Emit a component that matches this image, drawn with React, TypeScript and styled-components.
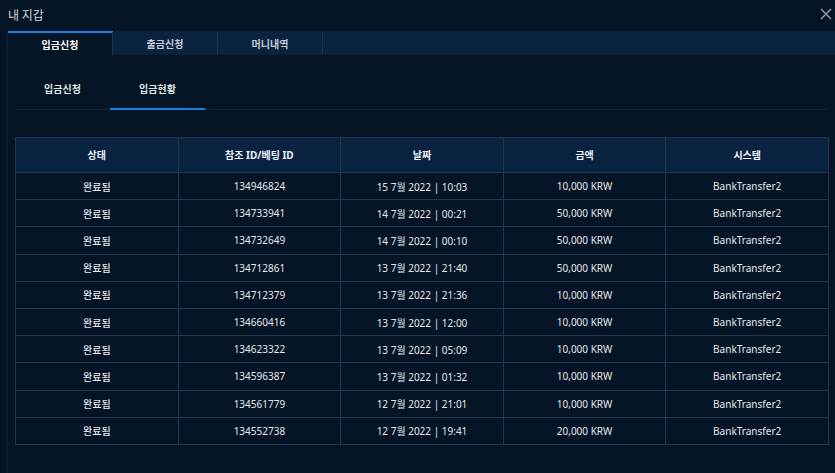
import React from "react";
import styled, { createGlobalStyle } from "styled-components";

const Global = createGlobalStyle`
  html, body { margin: 0; padding: 0; background: #061526; }
  body { font-family: "Noto Sans", "Noto Sans CJK KR", sans-serif; }
`;

const Page = styled.div`
  width: 835px;
  height: 473px;
  background: #061526;
  color: #e6e9ee;
  display: flex;
  flex-direction: column;
  overflow: hidden;
`;

const TitleBar = styled.div`
  height: 31px;
  display: flex;
  align-items: center;
  justify-content: space-between;
  padding: 0 2px 3px 8px;
  box-sizing: border-box;
`;

const Title = styled.div`
  font-size: 12px;
  color: #d0d4da;
  font-family: "Noto Sans CJK KR", sans-serif;
`;

const Close = styled.button`
  background: none;
  border: none;
  padding: 0;
  width: 14px;
  height: 14px;
  display: flex;
  align-items: center;
  justify-content: center;
  cursor: pointer;
`;

const Panel = styled.div`
  flex: 1;
  margin-left: 7px;
  border-left: 1px solid #112339;
  display: flex;
  flex-direction: column;
`;

const TabBar = styled.div`
  height: 24px;
  background: #0a2340;
  display: flex;
  border-bottom: 1px solid #0d1c2e;
  box-sizing: border-box;
`;

const Tab = styled.div<{ $active?: boolean }>`
  width: 105px;
  box-sizing: border-box;
  display: flex;
  align-items: center;
  justify-content: center;
  font-size: 10px;
  font-weight: 700;
  font-family: "Noto Sans CJK KR", sans-serif;
  color: ${(p) => (p.$active ? "#ffffff" : "#c6ccd4")};
  background: ${(p) => (p.$active ? "#061526" : "#0a2340")};
  border-top: 2px solid ${(p) => (p.$active ? "#1282e6" : "#0a2340")};
  border-right: 1px solid #1d3350;
  margin-bottom: ${(p) => (p.$active ? "-1px" : "0")};
`;

const SubTabs = styled.div`
  margin: 15px 6px 0 7px;
  height: 39px;
  display: flex;
  border-bottom: 1px solid #122538;
`;

const SubTab = styled.div<{ $active?: boolean }>`
  width: 95px;
  display: flex;
  align-items: center;
  justify-content: center;
  padding-bottom: 1px;
  font-size: 10px;
  font-weight: 700;
  font-family: "Noto Sans CJK KR", sans-serif;
  color: #dfe3e8;
  border-bottom: 2px solid ${(p) => (p.$active ? "#1180e3" : "transparent")};
  margin-bottom: -1px;
  box-sizing: border-box;
`;

const Table = styled.table`
  margin: 27px 6px 0 7px;
  width: calc(100% - 13px);
  border-collapse: collapse;
  table-layout: fixed;
  font-size: 10px;
`;

const Th = styled.th`
  height: 33px;
  padding: 0 0 1px;
  background: #0a2340;
  border: 1px solid #213650;
  color: #eef1f5;
  font-weight: 700;
  font-family: "Noto Sans", "Noto Sans CJK KR", sans-serif;
`;

const Td = styled.td<{ $strong?: boolean }>`
  height: 26.2px;
  border: 1px solid #213650;
  text-align: center;
  color: #e4e8ed;
  padding: 0;
  font-weight: ${(p) => (p.$strong ? 500 : 400)};
  font-family: "Noto Sans", "Noto Sans CJK KR", sans-serif;
`;

const rows: [string, string, string, string][] = [
  ["134946824", "15 7월 2022 | 10:03", "10,000 KRW", "BankTransfer2"],
  ["134733941", "14 7월 2022 | 00:21", "50,000 KRW", "BankTransfer2"],
  ["134732649", "14 7월 2022 | 00:10", "50,000 KRW", "BankTransfer2"],
  ["134712861", "13 7월 2022 | 21:40", "50,000 KRW", "BankTransfer2"],
  ["134712379", "13 7월 2022 | 21:36", "10,000 KRW", "BankTransfer2"],
  ["134660416", "13 7월 2022 | 12:00", "10,000 KRW", "BankTransfer2"],
  ["134623322", "13 7월 2022 | 05:09", "10,000 KRW", "BankTransfer2"],
  ["134596387", "13 7월 2022 | 01:32", "10,000 KRW", "BankTransfer2"],
  ["134561779", "12 7월 2022 | 21:01", "10,000 KRW", "BankTransfer2"],
  ["134552738", "12 7월 2022 | 19:41", "20,000 KRW", "BankTransfer2"],
];

export default function App() {
  return (
    <>
      <Global />
      <Page>
        <TitleBar>
          <Title>내 지갑</Title>
          <Close aria-label="close">
            <svg width="12" height="12" viewBox="0 0 12 12">
              <path d="M1 1L11 11M11 1L1 11" stroke="#8d939c" strokeWidth="1.6" />
            </svg>
          </Close>
        </TitleBar>
        <Panel>
          <TabBar>
            <Tab $active>입금신청</Tab>
            <Tab>출금신청</Tab>
            <Tab>머니내역</Tab>
          </TabBar>
          <SubTabs>
            <SubTab>입금신청</SubTab>
            <SubTab $active>입금현황</SubTab>
          </SubTabs>
          <Table>
            <thead>
              <tr>
                <Th>상태</Th>
                <Th>참조 ID/베팅 ID</Th>
                <Th>날짜</Th>
                <Th>금액</Th>
                <Th>시스템</Th>
              </tr>
            </thead>
            <tbody>
              {rows.map((r) => (
                <tr key={r[0]}>
                  <Td $strong>완료됨</Td>
                  <Td>{r[0]}</Td>
                  <Td>{r[1]}</Td>
                  <Td>{r[2]}</Td>
                  <Td>{r[3]}</Td>
                </tr>
              ))}
            </tbody>
          </Table>
        </Panel>
      </Page>
    </>
  );
}
